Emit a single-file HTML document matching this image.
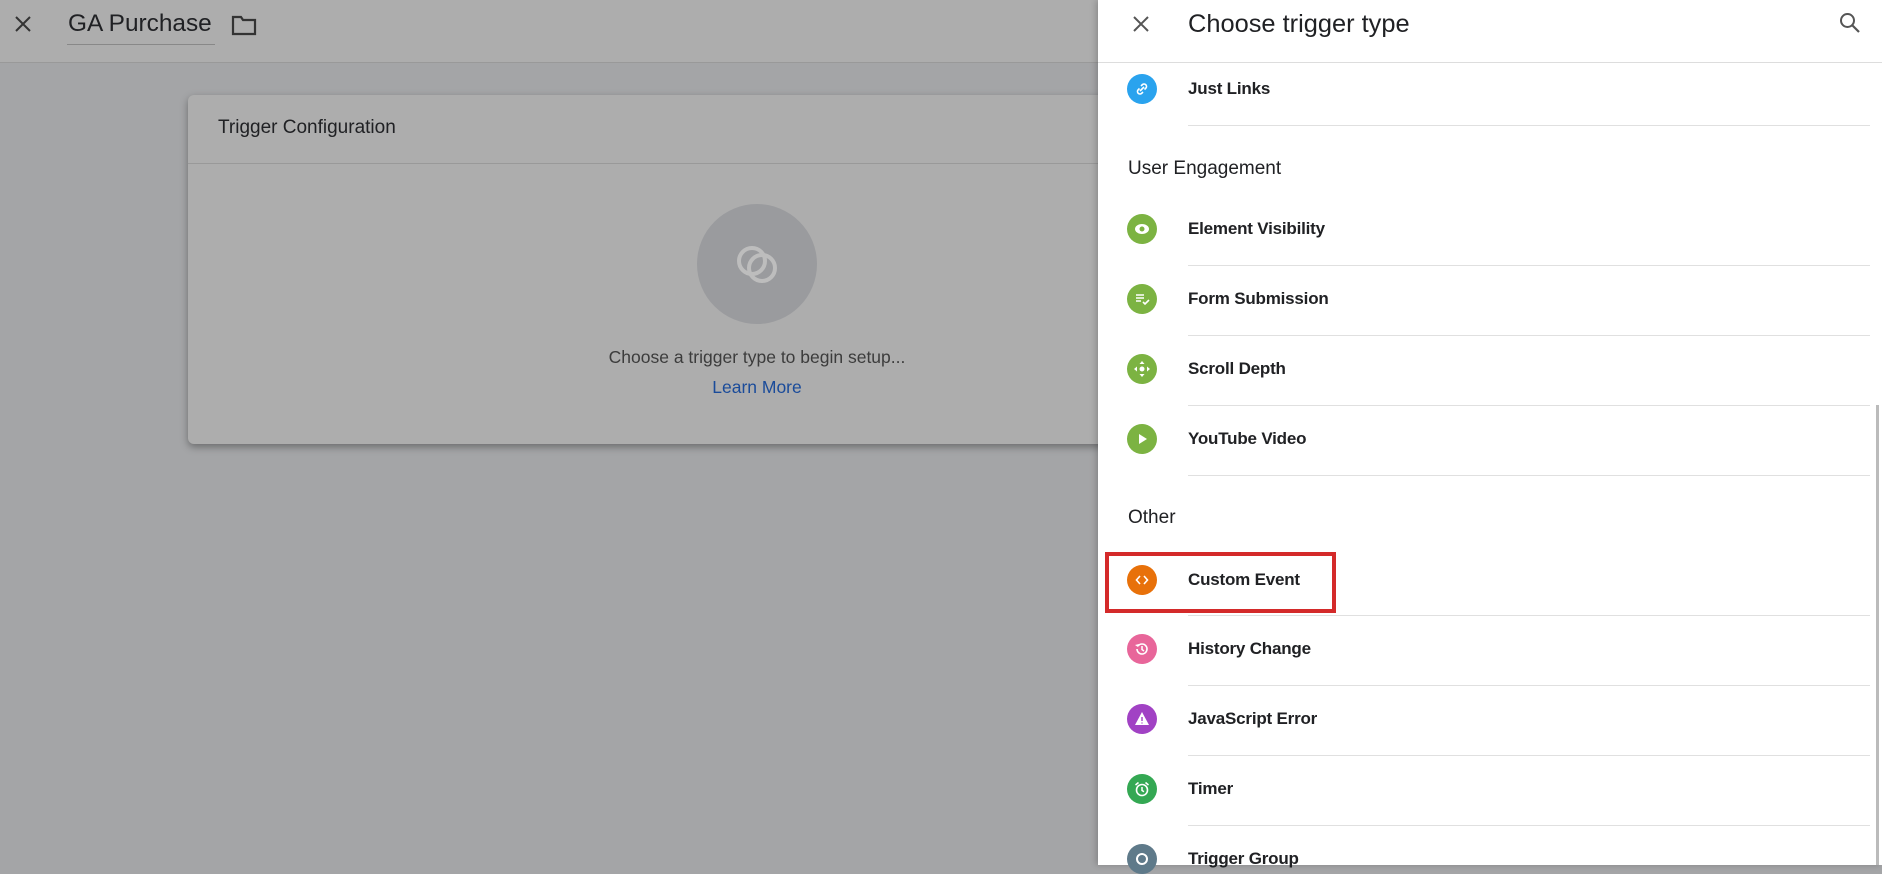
<!DOCTYPE html>
<html><head><meta charset="utf-8"><style>
*{margin:0;padding:0;box-sizing:border-box}
body{width:1882px;height:865px;overflow:hidden;position:relative;background:#a4a5a7;font-family:"Liberation Sans",Arial,sans-serif}
.abs{position:absolute}
.lh{top:0;left:0;width:1098px;height:63px;background:#adadad;border-bottom:1px solid #999}
.card{left:188px;top:95px;width:1000px;height:349px;background:#adadad;border-radius:6px;box-shadow:0 3px 8px rgba(0,0,0,.35)}
.panel{left:1098px;top:0;width:784px;height:865px;background:#fff;box-shadow:-2px 0 6px rgba(0,0,0,.2)}
.ic{position:absolute;left:29px;width:30px;height:30px;border-radius:50%;display:flex;align-items:center;justify-content:center}
.lbl{position:absolute;left:90px;font-size:17px;font-weight:bold;color:#202124;letter-spacing:-.2px}
.div{position:absolute;left:90px;right:12px;height:1px;background:#e0e0e0}
.sec{position:absolute;left:30px;font-size:19px;color:#202124}
</style></head><body>
<div class="abs lh">
 <svg class="abs" style="left:13px;top:14px" width="20" height="20" viewBox="0 0 20 20"><path d="M3 3L17 17M17 3L3 17" stroke="#333" stroke-width="2"/></svg>
 <div class="abs" style="left:68px;top:10px;font-size:24.4px;color:#202124">GA Purchase</div>
 <div class="abs" style="left:67px;top:44px;width:148px;height:1px;background:#888"></div>
 <svg class="abs" style="left:231px;top:14px" width="26" height="22" viewBox="0 0 26 22"><path d="M2 3h8l2 3h12v14H2z" fill="none" stroke="#333" stroke-width="2.2"/></svg>
</div>
<div class="abs card">
 <div class="abs" style="left:30px;top:22px;font-size:19px;color:#202124">Trigger Configuration</div>
 <div class="abs" style="left:0;right:0;top:68px;height:1px;background:#999"></div>
 <div class="abs" style="left:509px;top:109px;width:120px;height:120px;border-radius:50%;background:#9a9b9e"></div>
 <svg class="abs" style="left:529px;top:129px" width="80" height="80" viewBox="0 0 80 80"><circle cx="35" cy="37" r="13" fill="none" stroke="#bdbdbd" stroke-width="4"/><circle cx="45" cy="44" r="13" fill="none" stroke="#bdbdbd" stroke-width="4"/></svg>
 <div class="abs" style="left:0;width:1138px;top:252px;text-align:center;font-size:17.5px;color:#3c3c3c">Choose a trigger type to begin setup...</div>
 <div class="abs" style="left:0;width:1138px;top:282px;text-align:center;font-size:17.5px;color:#1a4b9a">Learn More</div>
</div>
<div class="abs panel">
 <svg class="abs" style="left:33px;top:14px" width="20" height="20" viewBox="0 0 20 20"><path d="M3 3L17 17M17 3L3 17" stroke="#555" stroke-width="2"/></svg>
 <div class="abs" style="left:90px;top:10px;font-size:25.4px;color:#202124">Choose trigger type</div>
 <svg class="abs" style="left:740px;top:11px" width="24" height="24" viewBox="0 0 24 24"><circle cx="9.5" cy="9.5" r="6.5" fill="none" stroke="#555" stroke-width="2"/><path d="M14.5 14.5L21 21" stroke="#555" stroke-width="2.2"/></svg>
 <div class="abs" style="left:0;right:0;top:62px;height:1px;background:#ddd"></div>

 <div class="ic" style="top:74px;background:#2aa3ee"><svg width="16" height="16" viewBox="0 0 16 16"><path d="M6 10l4-4M7 5l1.5-1.5a2.5 2.5 0 013.5 3.5L10.5 8.5M9 11l-1.5 1.5a2.5 2.5 0 01-3.5-3.5L5.5 7.5" stroke="#fff" stroke-width="1.6" fill="none"/></svg></div>
 <div class="lbl" style="top:79px">Just Links</div>
 <div class="div" style="top:125px"></div>

 <div class="sec" style="top:158px">User Engagement</div>

 <div class="ic" style="top:214px;background:#7cb342"><svg width="18" height="18" viewBox="0 0 18 18"><ellipse cx="9" cy="9" rx="7" ry="5" fill="#fff"/><circle cx="9" cy="9" r="2.5" fill="#7cb342"/></svg></div>
 <div class="lbl" style="top:219px">Element Visibility</div>
 <div class="div" style="top:265px"></div>

 <div class="ic" style="top:284px;background:#7cb342"><svg width="18" height="18" viewBox="0 0 18 18"><path d="M3 5h8M3 8h8M3 11h5M10 12l2 2 4-4" stroke="#fff" stroke-width="1.6" fill="none"/></svg></div>
 <div class="lbl" style="top:289px">Form Submission</div>
 <div class="div" style="top:335px"></div>

 <div class="ic" style="top:354px;background:#7cb342"><svg width="18" height="18" viewBox="0 0 18 18"><circle cx="9" cy="9" r="2.5" fill="#fff"/><path d="M9 1l2.5 3h-5zM9 17l2.5-3h-5zM1 9l3-2.5v5zM17 9l-3-2.5v5z" fill="#fff"/></svg></div>
 <div class="lbl" style="top:359px">Scroll Depth</div>
 <div class="div" style="top:405px"></div>

 <div class="ic" style="top:424px;background:#7cb342"><svg width="14" height="14" viewBox="0 0 14 14"><path d="M4 2l8 5-8 5z" fill="#fff"/></svg></div>
 <div class="lbl" style="top:429px">YouTube Video</div>
 <div class="div" style="top:475px"></div>

 <div class="sec" style="top:507px">Other</div>

 <div class="abs" style="left:7px;top:552px;width:231px;height:61px;border:4px solid #d42a2a"></div>
 <div class="ic" style="top:565px;background:#e8710a"><svg width="16" height="16" viewBox="0 0 16 16"><path d="M6 4L2.5 8 6 12M10 4l3.5 4-3.5 4" stroke="#fff" stroke-width="1.6" fill="none"/></svg></div>
 <div class="lbl" style="top:570px">Custom Event</div>
 <div class="div" style="top:615px"></div>

 <div class="ic" style="top:634px;background:#e8669a"><svg width="18" height="18" viewBox="0 0 18 18"><path d="M4 9a5 5 0 105-5 5 5 0 00-4 2" stroke="#fff" stroke-width="1.6" fill="none"/><path d="M2 5l3 2 1-3z" fill="#fff"/><path d="M9 6v3.5l2 1.5" stroke="#fff" stroke-width="1.5" fill="none"/></svg></div>
 <div class="lbl" style="top:639px">History Change</div>
 <div class="div" style="top:685px"></div>

 <div class="ic" style="top:704px;background:#a142c4"><svg width="18" height="18" viewBox="0 0 18 18"><path d="M9 2l7 13H2z" fill="#fff"/><path d="M9 7v4M9 12.5v1" stroke="#a142c4" stroke-width="1.4"/></svg></div>
 <div class="lbl" style="top:709px">JavaScript Error</div>
 <div class="div" style="top:755px"></div>

 <div class="ic" style="top:774px;background:#34a853"><svg width="18" height="18" viewBox="0 0 18 18"><circle cx="9" cy="10" r="5.5" stroke="#fff" stroke-width="1.6" fill="none"/><path d="M9 7v3.5l2 1.2M2.5 5l3-2.5M15.5 5l-3-2.5" stroke="#fff" stroke-width="1.5" fill="none"/></svg></div>
 <div class="lbl" style="top:779px">Timer</div>
 <div class="div" style="top:825px"></div>

 <div class="ic" style="top:844px;background:#5f7a8a"><svg width="18" height="18" viewBox="0 0 18 18"><circle cx="9" cy="9" r="5" stroke="#fff" stroke-width="2" fill="none"/></svg></div>
 <div class="lbl" style="top:849px">Trigger Group</div>

 <div class="abs" style="left:778px;top:405px;width:3px;height:460px;background:#bbb"></div>
</div>
</body></html>
